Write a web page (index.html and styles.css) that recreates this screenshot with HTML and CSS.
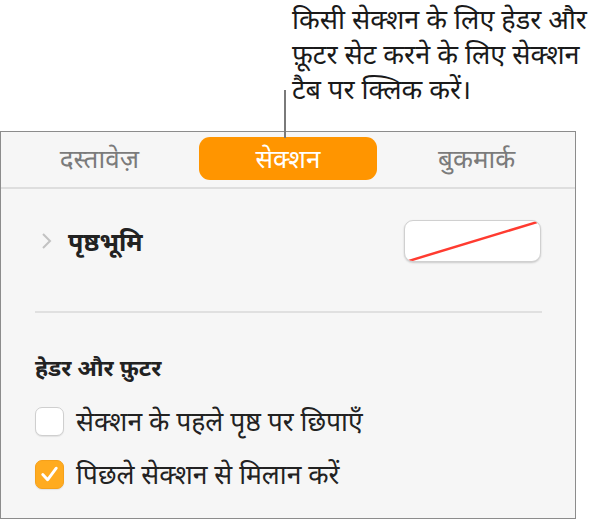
FILE: index.html
```html
<!DOCTYPE html>
<html lang="hi">
<head>
<meta charset="utf-8">
<link rel="stylesheet" href="styles.css">
</head>
<body>
<div class="callout">
  <p class="callout-text">किसी सेक्शन के लिए हेडर और<br>फ़ूटर सेट करने के लिए सेक्शन<br>टैब पर क्लिक करें।</p>
  <div class="connector"></div>
</div>
<div class="panel">
  <div class="tabs">
    <div class="tab">दस्तावेज़</div>
    <div class="tab active">सेक्शन</div>
    <div class="tab">बुकमार्क</div>
  </div>
  <div class="bg-section">
    <div class="bg-row">
      <div class="bg-label">
        <svg class="chevron" width="12" height="18" viewBox="0 0 12 18"><path d="M3 2 L10 9 L3 16" fill="none" stroke="#c2c2c2" stroke-width="2"/></svg>
        <span class="label-bold">पृष्ठभूमि</span>
      </div>
      <div class="well">
        <svg class="well-line" width="136" height="42" viewBox="0 0 136 42"><line x1="4" y1="40" x2="133" y2="1" stroke="#ff3b30" stroke-width="2.5"/></svg>
      </div>
    </div>
  </div>
  <div class="divider"></div>
  <div class="hf-section">
    <div class="heading">हेडर और फ़ुटर</div>
    <div class="check-row">
      <span class="box"></span>
      <span class="check-label">सेक्शन के पहले पृष्ठ पर छिपाएँ</span>
    </div>
    <div class="check-row">
      <span class="box checked"><svg width="28" height="28" viewBox="0 0 28 28"><path d="M7 14.5 L12 20 L21 8" fill="none" stroke="#fff" stroke-width="3" stroke-linecap="round" stroke-linejoin="round"/></svg></span>
      <span class="check-label">पिछले सेक्शन से मिलान करें</span>
    </div>
  </div>
</div>
</body>
</html>
```
FILE: styles.css
```css
* { box-sizing: border-box; }
html, body { margin: 0; padding: 0; background: #fff; }
body {
  font-family: "Noto Sans", "Noto Sans Devanagari", "Lohit Devanagari", sans-serif;
  color: #222;
  width: 606px;
  height: 519px;
  overflow: hidden;
}
.callout {
  position: relative;
  height: 131px;
}
.callout-text {
  margin: 0;
  padding: 1px 0 0 292px;
  font-size: 27px;
  line-height: 35px;
  color: #1a1a1a;
  white-space: nowrap;
}
.connector {
  position: absolute;
  left: 284px;
  top: 90px;
  width: 2px;
  height: 48px;
  background: #7a7a7a;
  z-index: 2;
}
.panel {
  width: 576px;
  height: 388px;
  border: 1px solid #8c8c8c;
  background: #f6f6f6;
}
.tabs {
  display: grid;
  grid-template-columns: repeat(3, 1fr);
  padding: 5px 4px 7px;
  border-bottom: 2px solid #dedede;
}
.tab {
  justify-self: center;
  width: 178px;
  height: 43px;
  border-radius: 11px;
  display: flex;
  align-items: center;
  justify-content: center;
  font-size: 26px;
  line-height: 43px;
  color: #7b7b7b;
}
.tab.active {
  background: #ff9500;
  color: #fff;
}
.bg-section {
  padding: 31px 34px 49px 34px;
}
.bg-row {
  display: flex;
  align-items: center;
  justify-content: space-between;
  height: 42px;
}
.bg-label {
  display: flex;
  align-items: center;
  gap: 16px;
  padding-left: 5px;
}
.label-bold {
  font-size: 25px;
  font-weight: 700;
  line-height: 30px;
  color: #222;
}
.well {
  width: 137px;
  height: 42px;
  background: #fff;
  border-radius: 9px;
  border: 1px solid #d0d0d0;
  box-shadow: 0 1px 2px rgba(0,0,0,0.18);
  overflow: hidden;
  display: flex;
}
.divider {
  height: 2px;
  background: #e0e0e0;
  margin: 0 33px 0 34px;
}
.hf-section {
  padding: 39px 34px 0 34px;
  display: flex;
  flex-direction: column;
}
.heading {
  font-size: 23px;
  font-weight: 700;
  line-height: 30px;
  margin-bottom: 24px;
}
.check-row {
  display: flex;
  align-items: center;
  gap: 12px;
  height: 30px;
  margin-bottom: 23px;
}
.box {
  width: 29px;
  height: 29px;
  border-radius: 7px;
  background: #fff;
  border: 1px solid #cfcfcf;
  box-shadow: 0 1px 1px rgba(0,0,0,0.08);
  display: flex;
  align-items: center;
  justify-content: center;
  flex: none;
}
.box.checked {
  background: #ffab1f;
  border-color: #f5a01a;
}
.check-label {
  font-size: 26.5px;
  line-height: 30px;
  color: #222;
}
```
